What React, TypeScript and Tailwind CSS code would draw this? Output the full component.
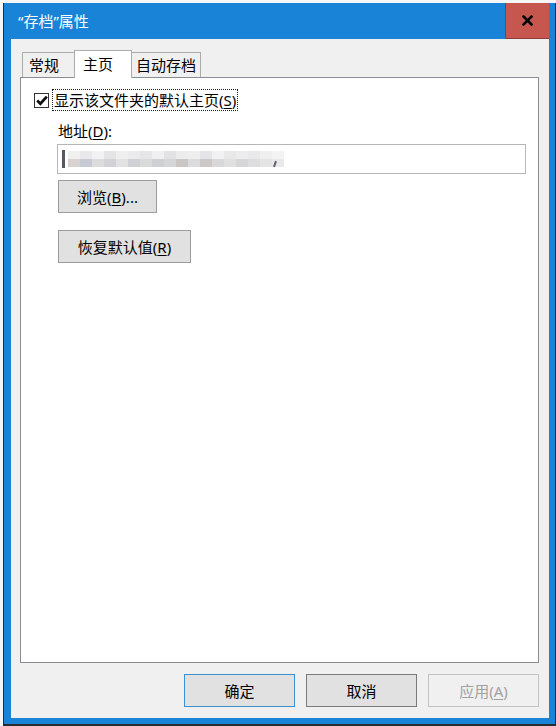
import { type ReactNode } from "react";
import clsx from "clsx";

// blurred address text, drawn as two rows of pixel blocks
const mosaicTop = [
  "bg-[#f0f0f0]", "bg-[#e9e9eb]", "bg-[#f2f2f2]", "bg-[#e4e4e6]", "bg-[#efefef]", "bg-[#ebebeb]",
  "bg-[#e6e6e8]", "bg-[#f0f0f0]", "bg-[#e2e2e4]", "bg-[#ececec]", "bg-[#eeeeee]", "bg-[#e5e5e7]",
  "bg-[#f1f1f1]", "bg-[#e8e8e8]", "bg-[#ececee]", "bg-[#e9e9e9]", "bg-[#efefef]", "bg-[#f3f3f3]",
];
const mosaicBottom = [
  "bg-[#d9d2d0]", "bg-[#c6cad2]", "bg-[#dcdcdc]", "bg-[#d3d3d7]", "bg-[#e2e2e2]", "bg-[#d0d1d5]",
  "bg-[#dadada]", "bg-[#cfd0d4]", "bg-[#d5d6d8]", "bg-[#cbc5c6]", "bg-[#dcdcde]", "bg-[#ccc8c8]",
  "bg-[#d8d8da]", "bg-[#e0e0e0]", "bg-[#d6d6d8]", "bg-[#dddddd]", "bg-[#e4e4e4]", "bg-[#e9e9e9]",
];

function Key({ children }: { children: ReactNode }) {
  return <span className="underline decoration-1 underline-offset-[2px]">{children}</span>;
}

function Btn({ children, className }: { children: ReactNode; className?: string }) {
  return (
    <button
      type="button"
      className={clsx(
        "flex items-center justify-center border text-[15px] leading-[20px] h-[33px]",
        className
      )}
    >
      {children}
    </button>
  );
}

export default function App() {
  return (
    <div className="w-[556px] h-[726px] bg-[#f6f6f6] pt-[3px] pl-[3px] font-['Noto_Sans','Noto_Sans_CJK_SC',sans-serif] text-black overflow-hidden">
      <div className="w-[553px] h-[723px] bg-[#1883d7] border-l border-r border-b-2 border-[#2b2b2b] pl-[7px] pr-[6px] pb-[6px] flex flex-col">
        {/* title bar */}
        <div className="h-[36px] flex items-center justify-between">
          <span className="pl-[7px] text-white text-[15px] leading-[20px]">“存档”属性</span>
          <div className="w-[44px] h-[36px] bg-[#c6574f] border-l border-b border-[#8e3c36] flex items-center justify-center">
            <svg width="11" height="11" viewBox="0 0 11 11">
              <path d="M1.5 1.5 L9.5 9.5 M9.5 1.5 L1.5 9.5" stroke="#000" strokeWidth="2.6" strokeLinecap="square" />
            </svg>
          </div>
        </div>

        {/* dialog body */}
        <div className="flex-1 bg-[#f0f0f0] flex flex-col">
          <div className="relative z-10 mt-[11px] ml-[11px] flex items-start h-[28px] text-[15px] leading-[20px]">
            <div className="mt-[2px] h-[25px] w-[52px] border-l border-t border-[#acacac] pl-[6px] pt-[2px]">常规</div>
            <div className="h-[28px] w-[58px] bg-white border-l border-t border-r border-[#acacac] pl-[8px] pt-[3px]">主页</div>
            <div className="mt-[2px] h-[25px] w-[69px] border-t border-r border-[#acacac] pl-[4px] pt-[2px]">自动存档</div>
          </div>

          <div className="-mt-[1px] ml-[9px] mr-[10px] flex-1 bg-white border border-[#898c95] flex flex-col text-[15px] leading-[20px]">
            <div className="mt-[11px] ml-[13px] flex items-center h-[22px]">
              <div className="w-[15px] h-[15px] border border-[#333333] bg-white flex items-center justify-center">
                <svg width="12" height="11" viewBox="0 0 12 11">
                  <path d="M1.2 5.6 L4.4 8.8 L10.8 1.6" fill="none" stroke="#111" strokeWidth="2.8" />
                </svg>
              </div>
              <div className="ml-[3px] h-[22px] px-[1px] flex items-center border border-dotted border-[#202020]">
                显示该文件夹的默认主页(<Key>S</Key>)
              </div>
            </div>

            <div className="mt-[10px] ml-[37px]">
              地址(<Key>D</Key>):
            </div>

            <div className="mt-[3px] ml-[36px] w-[469px] h-[30px] border border-[#b4b6bc] flex items-center pl-[4px]">
              <div className="w-[3px] h-[18px] bg-[#555a62] mr-[3px]" />
              <div className="flex flex-col">
                <div className="flex">
                  {mosaicTop.map((c, i) => (
                    <div key={i} className={clsx("w-[12px] h-[8px]", c)} />
                  ))}
                </div>
                <div className="flex">
                  {mosaicBottom.map((c, i) => (
                    <div key={i} className={clsx("w-[12px] h-[8px]", c)} />
                  ))}
                </div>
              </div>
              <div className="ml-[-10px] mt-[10px] w-[2px] h-[6px] bg-[#60646c] rotate-[20deg]" />
            </div>

            <Btn className="mt-[6px] ml-[37px] w-[99px] bg-[#e1e1e1] border-[#9c9c9c]">
              浏览(<Key>B</Key>)...
            </Btn>

            <Btn className="mt-[17px] ml-[37px] w-[133px] bg-[#e1e1e1] border-[#9c9c9c]">
              恢复默认值(<Key>R</Key>)
            </Btn>
          </div>

          <div className="mt-[11px] mb-[11px] mr-[10px] flex justify-end gap-[11px]">
            <Btn className="w-[111px] bg-[#e1e1e1] border-[#3c8fd0]">确定</Btn>
            <Btn className="w-[111px] bg-[#e1e1e1] border-[#7a7a7a]">取消</Btn>
            <Btn className="w-[111px] bg-[#f0f0f0] border-[#c2c2c2] text-[#a0a0a0]">
              应用(<Key>A</Key>)
            </Btn>
          </div>
        </div>
      </div>
    </div>
  );
}
